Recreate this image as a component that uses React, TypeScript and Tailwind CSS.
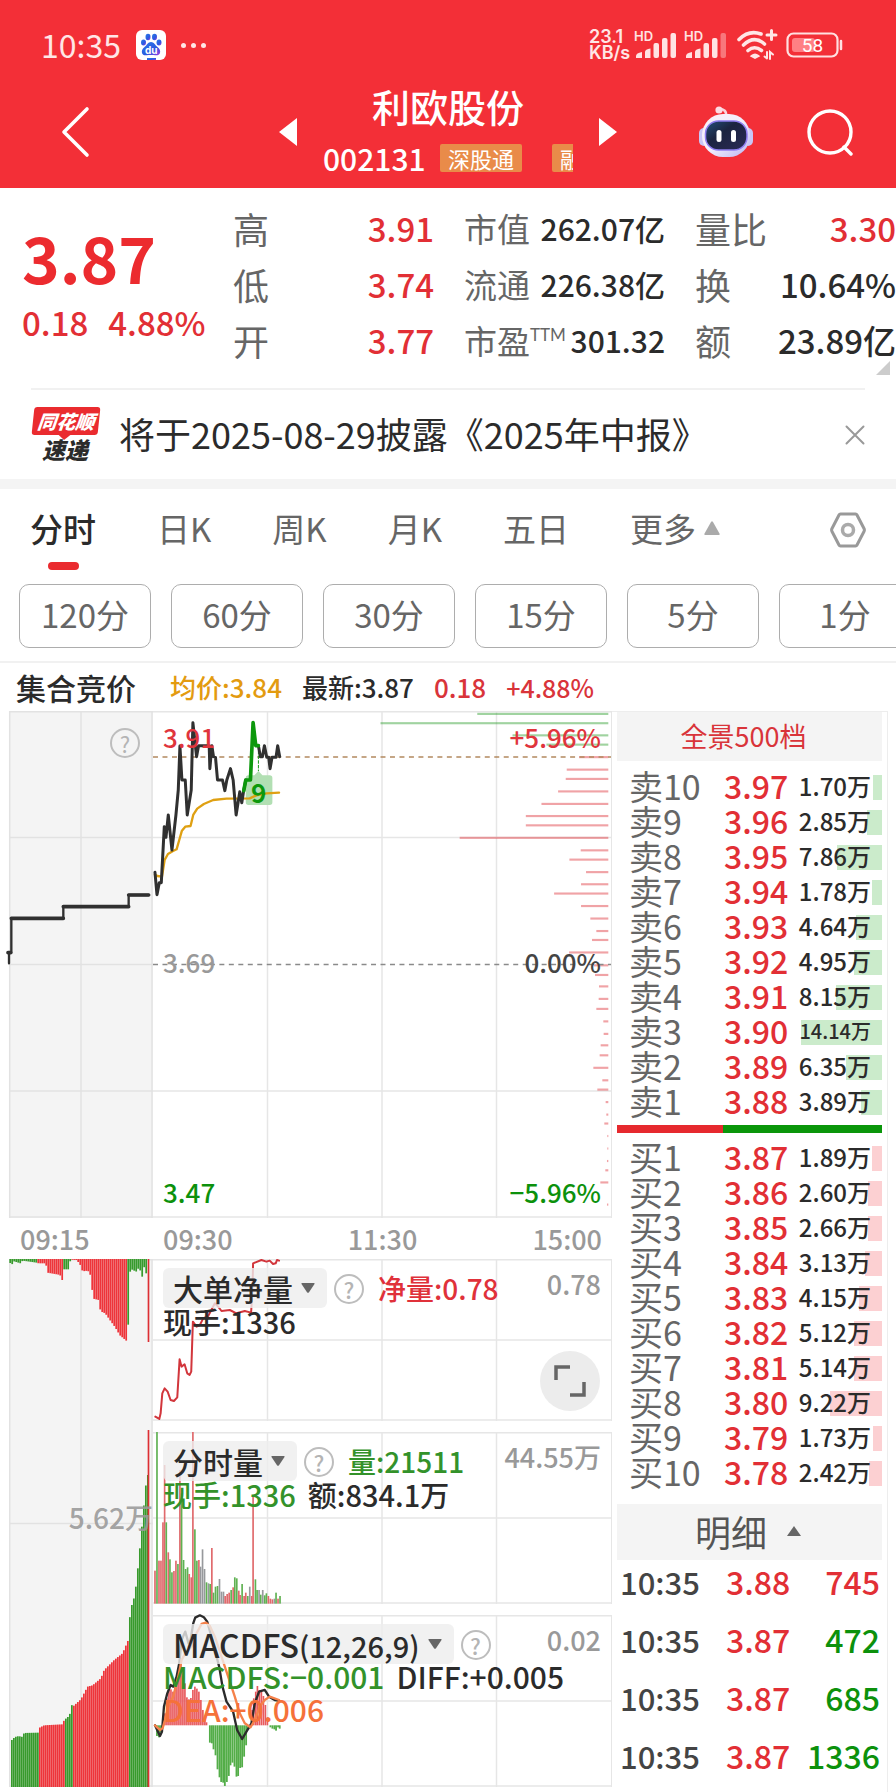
import React from "react";

type Tone = "r" | "g" | "n";

const quoteCols = [
  [
    { label: "高", value: "3.91", red: true },
    { label: "低", value: "3.74", red: true },
    { label: "开", value: "3.77", red: true },
  ],
  [
    { label: "市值", value: "262.07亿", red: false },
    { label: "流通", value: "226.38亿", red: false },
    { label: "市盈", sup: "TTM", value: "301.32", red: false },
  ],
  [
    { label: "量比", value: "3.30", red: true },
    { label: "换", value: "10.64%", red: false },
    { label: "额", value: "23.89亿", red: false },
  ],
];

const asks = [
  ["卖10", "3.97", "1.70万", 9],
  ["卖9", "3.96", "2.85万", 15],
  ["卖8", "3.95", "7.86万", 45],
  ["卖7", "3.94", "1.78万", 10],
  ["卖6", "3.93", "4.64万", 26],
  ["卖5", "3.92", "4.95万", 28],
  ["卖4", "3.91", "8.15万", 46],
  ["卖3", "3.90", "14.14万", 81],
  ["卖2", "3.89", "6.35万", 36],
  ["卖1", "3.88", "3.89万", 21],
] as const;

const bids = [
  ["买1", "3.87", "1.89万", 10],
  ["买2", "3.86", "2.60万", 14],
  ["买3", "3.85", "2.66万", 14],
  ["买4", "3.84", "3.13万", 17],
  ["买5", "3.83", "4.15万", 23],
  ["买6", "3.82", "5.12万", 28],
  ["买7", "3.81", "5.14万", 28],
  ["买8", "3.80", "9.22万", 52],
  ["买9", "3.79", "1.73万", 9],
  ["买10", "3.78", "2.42万", 13],
] as const;

const trades = [
  { time: "10:35", price: "3.88", volume: "745", up: true },
  { time: "10:35", price: "3.87", volume: "472", up: false },
  { time: "10:35", price: "3.87", volume: "685", up: false },
  { time: "10:35", price: "3.87", volume: "1336", up: false },
];

/* Volume by price: [y, left end]; the right end is shared. */
const profileUp = [
  [160, 840], [195, 803], [221, 800], [256, 777], [291, 727], [325, 680], [351, 680], [386, 481],
  [421, 845], [447, 811], [482, 861], [516, 846], [542, 765], [577, 846], [612, 874], [647, 892],
  [672, 879], [707, 810], [743, 885], [770, 888], [802, 900], [837, 899], [865, 892], [900, 913],
  [935, 914], [967, 905], [995, 902], [1030, 883], [1065, 910], [1091, 895], [1126, 920], [1161, 922],
  [1186, 916], [1221, 925], [1256, 925], [1291, 924], [1317, 919], [1351, 904], [1413, 924],
];
const profileDown = [[39, 534], [65, 243], [99, 640], [125, 742]];

const volumeBars: [number, number, Tone][] = [
  [465, 242, "r"], [471, -176, "g"], [477, 212, "r"], [483, 212, "r"], [489, 97, "r"], [494, -75, "r"],
  [499, 97, "g"], [505, 187, "r"], [510, 208, "g"], [516, 247, "g"], [522, 243, "r"], [528, 212, "r"],
  [534, 222, "g"], [540, -60, "r"], [545, 10, "g"], [551, 210, "g"], [557, 237, "g"], [563, 232, "g"],
  [568, 252, "r"], [574, 262, "r"], [579, -176, "r"], [585, 118, "g"], [591, 212, "g"], [597, 210, "r"],
  [602, 230, "n"], [608, 178, "n"], [614, 237, "n"], [620, 277, "g"], [626, 280, "n"], [631, 282, "g"],
  [636, 174, "r"], [641, 308, "g"], [647, 290, "g"], [653, 288, "g"], [659, 267, "n"], [665, 305, "n"],
  [671, 305, "n"], [676, 318, "r"], [682, 312, "r"], [688, 308, "r"], [694, 300, "g"], [700, 292, "r"],
  [705, 262, "g"], [711, 265, "g"], [717, 302, "r"], [721, 315, "r"], [727, 282, "g"], [733, 318, "r"],
  [738, 308, "r"], [744, 318, "g"], [750, 290, "n"], [756, 318, "r"], [760, 20, "r"], [767, 268, "g"],
  [772, 300, "g"], [778, 300, "n"], [783, 314, "g"], [789, 300, "n"], [795, 316, "g"], [800, 310, "g"],
  [806, 318, "r"], [812, 326, "r"], [818, 328, "r"], [824, 326, "n"], [829, 308, "g"], [835, 326, "r"],
  [841, 318, "g"],
];

const toneFill: Record<Tone, string> = { r: "#e0696c", g: "#5fb152", n: "#97999c" };

const auctionEdge: [number, number][] = [
  [33, 750], [42, 741], [55, 738], [62, 742], [70, 729], [112, 728], [116, 713], [130, 706], [185, 703],
  [190, 690], [206, 677], [212, 645], [218, 648], [240, 628], [260, 590], [275, 586], [300, 565],
  [310, 540], [340, 510], [365, 490], [384, 446], [388, 360], [396, 336], [402, 315], [408, 265],
  [414, 205], [420, 145], [426, 75], [432, 18], [438, -45],
];
const netEdge: [number, number][] = [
  [30, 12], [36, 18], [42, 8], [62, 14], [68, 6], [110, 12], [116, 14], [138, 14], [142, 42], [176, 48],
  [184, 52], [188, 68], [192, 32], [206, 32], [212, 3], [230, 4], [240, 16], [248, 38], [264, 36],
  [272, 50], [280, 120], [296, 124], [302, 158], [316, 164], [330, 184], [346, 206], [360, 230],
  [384, 250], [388, 42], [398, 32], [408, 40], [418, 26], [427, 54], [432, 22], [438, 44],
];

function valueAt(edge: [number, number][], x: number) {
  for (let i = 1; i < edge.length; i++) {
    if (x <= edge[i][0]) {
      const [x0, y0] = edge[i - 1];
      const [x1, y1] = edge[i];
      return x1 === x0 ? y1 : y0 + ((y1 - y0) * (x - x0)) / (x1 - x0);
    }
  }
  return edge[edge.length - 1][1];
}

const auctionXs = Array.from({ length: 69 }, (_, i) => 31 + i * 6);
const isAuctionGreen = (x: number) => x < 114 || (x > 187 && x < 213) || x > 384;

const macdUp: [number, number][] = [
  [495, 670], [501, 625], [507, 600], [513, 598], [519, 605], [525, 590], [531, 565], [537, 540],
  [543, 515], [549, 540], [555, 580], [561, 622], [567, 628], [573, 624], [579, 600], [585, 590],
  [591, 596], [597, 605], [603, 630], [609, 660], [615, 685], [620, 697], [757, 660], [762, 625],
  [768, 605], [773, 588], [779, 600], [785, 600], [791, 618], [797, 645], [803, 682],
];
const macdDown: [number, number][] = [
  [471, 738], [477, 742], [483, 728], [630, 758], [636, 760], [641, 778], [647, 796], [653, 838],
  [659, 862], [664, 876], [670, 878], [675, 888], [681, 876], [687, 858], [692, 826], [698, 818],
  [704, 830], [710, 860], [715, 858], [721, 834], [727, 832], [733, 800], [739, 766], [745, 718],
  [812, 712], [818, 716], [824, 718], [829, 722], [835, 712], [840, 716],
];

function Grid({ rows, height }: { rows: number[]; height: number }) {
  return (
    <g stroke="#e6e6e6" strokeWidth="1.5">
      {[114.75, 229.5, 344.25].map((x) => (
        <line key={x} x1={x} x2={x} y1="0" y2={height} />
      ))}
      {rows.map((y) => (
        <line key={y} x1="0" x2="459" y1={y} y2={y} />
      ))}
    </g>
  );
}

function Help() {
  return (
    <button
      type="button"
      aria-label="说明"
      className="flex size-[30px] shrink-0 items-center justify-center rounded-full border-2 border-[#bdbdbd] text-[22px] leading-none text-[#b4b4b4]"
    >
      ?
    </button>
  );
}

function IndicatorButton({ children }: { children: React.ReactNode }) {
  return (
    <button
      type="button"
      className="flex h-10 items-center gap-2 rounded-md bg-[#eeeeee]/80 pr-3 pl-[10px] text-[30px] leading-10 font-medium whitespace-nowrap text-[#2b2b2b]"
    >
      {children}
      <svg viewBox="0 0 14 10" className="h-2.5 w-3.5" fill="#666">
        <path d="M1 0h12q1 0 .5 1L8 9.300q-1 1-2 0L.5 1Q0 0 1 0z" />
      </svg>
    </button>
  );
}

function BookRow({ row, ask }: { row: readonly [string, string, string, number]; ask: boolean }) {
  const [label, price, volume, depth] = row;
  return (
    <tr className="h-[35px]">
      <th scope="row" className="w-[107px] p-0 pl-[12px] text-left text-[34px] leading-[35px] font-normal text-[#666]">
        {label}
      </th>
      <td className="p-0 text-[32px] leading-[35px] font-medium text-[#e22f35]">{price}</td>
      <td
        className={`relative w-[88px] p-0 pr-[11px] text-right leading-[35px] font-medium text-[#2b2b2b] ${
          volume.length > 5 ? "text-[20px]" : "text-[24px]"
        }`}
      >
        <span
          className={`absolute top-[7px] right-0 h-[25px] ${ask ? "bg-[#cbebcb]" : "bg-[#fcd0d2]"}`}
          style={{ width: depth }}
        />
        <span className="relative">{volume}</span>
      </td>
    </tr>
  );
}

function Signal({ weak }: { weak?: boolean }) {
  return (
    <svg viewBox="0 0 44 30" className="h-[30px] w-11" fill="#ffe3e3">
      <text x="0" y="11" fontSize="13" fontWeight="600" fontFamily="Inter, sans-serif">HD</text>
      <path d="M2 28v-2q0-3 6-4v6z" />
      <path d="M11 28v-6q0-3 5.500-3.500V28z" />
      <rect x="19.500" y="13" width="5.500" height="15" rx="2" />
      <rect x="28" y="8" width="5.500" height="20" rx="2" />
      <rect x="36.500" y="3" width="5.500" height="25" rx="2" opacity={weak ? 0.4 : 1} />
    </svg>
  );
}

function StatusBar() {
  return (
    <div className="flex h-[76px] items-center justify-between pt-[14px] pr-[52px] pl-[41px] text-[#ffe6e6]">
      <div className="flex items-center">
        <span className="pb-[3px] text-[32px] leading-none">10:35</span>
        <svg viewBox="0 0 30 30" className="ml-[15px] size-[30px]">
          <defs>
            <linearGradient id="paw" x1="0" y1="0" x2="1" y2="1">
              <stop offset="0" stopColor="#2a7be8" />
              <stop offset=".6" stopColor="#2b59e0" />
              <stop offset="1" stopColor="#a03be0" />
            </linearGradient>
          </defs>
          <rect width="30" height="30" rx="6" fill="#fff" />
          <g fill="url(#paw)">
            <ellipse cx="7.500" cy="12.500" rx="2.500" ry="3" />
            <ellipse cx="12" cy="7" rx="2.500" ry="3.200" />
            <ellipse cx="18.500" cy="7" rx="2.500" ry="3.200" />
            <ellipse cx="23" cy="12.500" rx="2.500" ry="3" />
            <path d="M15 12c3 0 4 3 6.500 5s3 4 2.500 6-2.500 2.500-4.500 2.300c-3-.4-6-.4-9 0C8 25.500 6.500 25 6 23s0-4 2.500-6S12 12 15 12z" />
            <rect x="11" y="28" width="9" height="2" />
          </g>
          <text x="15.200" y="23.500" textAnchor="middle" fontSize="10" fontWeight="700" fill="#fff" fontFamily="Inter, sans-serif">
            du
          </text>
        </svg>
        <span className="ml-[15px] flex gap-[5px]">
          <i className="size-[5px] rounded-full bg-current" />
          <i className="size-[5px] rounded-full bg-current" />
          <i className="size-[5px] rounded-full bg-current" />
        </span>
      </div>
      <div className="flex items-center">
        <span className="w-[45px] font-['Inter','Noto_Sans_CJK_SC',sans-serif] text-[18px] leading-4 font-semibold">
          23.1
          <br />
          KB/s
        </span>
        <Signal />
        <span className="w-[6px]" />
        <Signal weak />
        <svg viewBox="0 0 42 32" className="ml-2 h-8 w-[42px]" fill="none" stroke="#ffe6e6" strokeWidth="3.600" strokeLinecap="round">
          <path d="M3 10.500Q13 .5 25 5" />
          <path d="M7.500 16Q18 6 28.500 15" />
          <path d="M12 21.500q6.500-5.500 13.500 0" />
          <path d="M16 27q3-2.500 6 0l-3 1.500z" fill="#ffe6e6" strokeWidth="2.500" />
          <path d="M31 6h9M35.500 1.500v9" strokeWidth="3" />
          <path d="M31 29v-6M28.500 27.500l2.500 2M34 30v-7l3 2.500" strokeWidth="2" />
        </svg>
        <svg viewBox="0 0 58 26" className="ml-2 h-[26px] w-[58px]">
          <rect x="1.500" y="1.500" width="50" height="23" rx="6" fill="none" stroke="#ffe0e0" strokeWidth="2.200" />
          <rect x="6" y="6" width="23" height="14" rx="3" fill="#ff8084" />
          <path d="M55 9v8" stroke="#ffe0e0" strokeWidth="2.500" strokeLinecap="round" />
          <text x="26.500" y="20" textAnchor="middle" fontSize="19" fontWeight="400" fill="#fff" fontFamily="Roboto, sans-serif">
            58
          </text>
        </svg>
      </div>
    </div>
  );
}

function TitleBar() {
  return (
    <div className="grid h-[112px] grid-cols-[1fr_auto_1fr] items-center">
      <button type="button" aria-label="返回" className="ml-[60px] flex h-[82px] w-8 items-center">
        <svg viewBox="0 0 32 52" className="h-[52px] w-8" fill="none" stroke="#fff" strokeWidth="3.600" strokeLinecap="round" strokeLinejoin="round">
          <path d="M27 3L4 26l23 23" />
        </svg>
      </button>
      <div className="flex items-center gap-[26px]">
        <button type="button" aria-label="上一只">
          <svg viewBox="0 0 18 28" className="h-7 w-[18px]" fill="#fff">
            <path d="M18 0v28L0 14z" />
          </svg>
        </button>
        <div className="w-[250px] text-white">
          <h1 className="h-[52px] text-center text-[38px] leading-[38px] font-medium">利欧股份</h1>
          <div className="flex items-center overflow-hidden whitespace-nowrap">
            <span className="w-[117px] shrink-0 text-[30px] leading-[38px] font-medium">002131</span>
            <span className="shrink-0 rounded-xs bg-[#e98b49] px-[8px] text-[22px] leading-7">深股通</span>
            <span className="ml-[30px] shrink-0 rounded-xs bg-[#e98b49] pl-[8px] text-[22px] leading-7">融</span>
          </div>
        </div>
        <button type="button" aria-label="下一只">
          <svg viewBox="0 0 18 28" className="h-7 w-[18px]" fill="#fff">
            <path d="M0 0v28l18-14z" />
          </svg>
        </button>
      </div>
      <div className="flex items-center justify-end gap-[52px] pr-[42px]">
        <button type="button" aria-label="智能助手">
          <svg viewBox="0 0 56 52" className="h-[52px] w-14">
            <defs>
              <linearGradient id="shell" x1="0" y1="0" x2="1" y2="1">
                <stop offset="0" stopColor="#fdeff6" />
                <stop offset=".5" stopColor="#f1effd" />
                <stop offset="1" stopColor="#b9b3f0" />
              </linearGradient>
              <linearGradient id="visor" x1="0" y1="0" x2="1" y2="1">
                <stop offset="0" stopColor="#24507a" />
                <stop offset=".4" stopColor="#1c2440" />
                <stop offset="1" stopColor="#2a2a55" />
              </linearGradient>
            </defs>
            <path d="M21 3q8 0 7 7" fill="none" stroke="#fbd3dc" strokeWidth="2.500" />
            <circle cx="21" cy="4" r="3.600" fill="#fcdce4" />
            <rect x="1" y="22" width="10" height="18" rx="5" fill="#c9c6f6" />
            <rect x="45" y="22" width="10" height="18" rx="5" fill="#c9c6f6" />
            <rect x="4" y="8" width="48" height="43" rx="21" fill="url(#shell)" />
            <rect x="7.500" y="15" width="41.500" height="29" rx="13" fill="url(#visor)" stroke="#8f7df0" strokeWidth="1.500" />
            <rect x="18.500" y="24" width="5" height="12" rx="2.500" fill="#fff" />
            <rect x="33" y="24" width="5" height="12" rx="2.500" fill="#fff" />
          </svg>
        </button>
        <button type="button" aria-label="搜索">
          <svg viewBox="0 0 48 48" className="size-12" fill="none" stroke="#fff" strokeWidth="3.400" strokeLinecap="round">
            <circle cx="24" cy="24" r="21" />
            <path d="M38 39l7 7" />
          </svg>
        </button>
      </div>
    </div>
  );
}

function Quote() {
  return (
    <section className="relative flex h-[200px] pt-[12px]">
      <div className="w-[233px] shrink-0 pl-[22px] text-[#e22f35]">
        <p className="pt-[14px] text-[64px] leading-[84px] font-bold text-[#ec2b2f]">3.87</p>
        <p className="flex gap-5 text-[33px] leading-[48px] font-medium whitespace-nowrap">
          <span>0.18</span>
          <span>4.88%</span>
        </p>
      </div>
      <div className="grid flex-1 grid-cols-3 gap-x-[30px]">
        {quoteCols.map((col, i) => (
          <dl key={i}>
            {col.map((q) => (
              <div key={q.label} className="flex h-14 items-center justify-between whitespace-nowrap">
                <dt className={`flex items-center leading-none text-[#666] ${i === 1 ? "text-[33px]" : "text-[36px]"}`}>
                  {q.label}
                  {"sup" in q && <sup className="top-[-6px] font-['Lato',sans-serif] text-[17px] leading-none">{q.sup}</sup>}
                </dt>
                <dd
                  className={`leading-none font-medium ${q.red ? "text-[#e22f35]" : "text-[#2b2b2b]"} ${
                    i === 1 ? "text-[30px]" : "text-[33px]"
                  }`}
                >
                  {q.value}
                </dd>
              </div>
            ))}
          </dl>
        ))}
      </div>
      <svg viewBox="0 0 14 14" className="absolute right-[6px] bottom-[13px] size-[14px]" fill="#ccc">
        <path d="M14 0v14H0z" />
      </svg>
    </section>
  );
}

function News() {
  return (
    <section className="mx-[31px] flex h-[91px] items-center border-t-2 border-[#f1f1f1]">
      <div className="w-[68px] text-center italic">
        <p className="relative ml-[2px] -skew-x-6 rounded-[3px] bg-[#ea2b2f] text-[19px] leading-[28px] font-black text-white">
          同花顺
          <svg viewBox="0 0 14 6" className="absolute -bottom-[5px] left-[26px] h-1.5 w-3.5" fill="#ea2b2f">
            <path d="M0 0h14L7 6z" />
          </svg>
        </p>
        <p className="text-[23px] leading-[28px] font-black text-[#2b2b2b]">速递</p>
      </div>
      <a href="#report" className="ml-[20px] flex-1 pb-1 text-[36px] leading-none whitespace-nowrap text-[#2b2b2b]">
        将于2025-08-29披露《2025年中报》
      </a>
      <button type="button" aria-label="关闭">
        <svg viewBox="0 0 20 20" className="size-5" stroke="#999" strokeWidth="2" strokeLinecap="round">
          <path d="M1.500 1.500l17 17M18.500 1.500l-17 17" />
        </svg>
      </button>
    </section>
  );
}

function Tabs() {
  return (
    <nav className="flex h-[95px] items-start justify-between pt-[14px] pr-[30px] pl-[30px]">
      <div className="flex gap-[61px] text-[33px] leading-[50px] text-[#666]">
        <button type="button" className="flex flex-col items-center font-medium text-[#2b2b2b]">
          分时
          <i className="mt-[9px] h-2 w-[31px] rounded-full bg-[#ea2b2f]" />
        </button>
        <button type="button" className="self-start">日K</button>
        <button type="button" className="self-start">周K</button>
        <button type="button" className="self-start">月K</button>
        <button type="button" className="self-start">五日</button>
        <button type="button" className="flex items-center gap-2 self-start">
          更多
          <svg viewBox="0 0 16 14" className="h-3.5 w-4" fill="#aaa">
            <path d="M7 1q1-1.500 2 0l6.500 11.500q.5 1.500-1 1.500h-13Q0 14 .5 12.500z" />
          </svg>
        </button>
      </div>
      <button type="button" aria-label="设置" className="mt-[9px]">
        <svg viewBox="0 0 36 36" className="size-9" fill="none" stroke="#999" strokeWidth="3" strokeLinejoin="round">
          <path d="M10.500 2h15q1 0 1.500 1l7 13.500q.8 1.500 0 3L27 33q-.5 1-1.500 1h-15Q9.500 34 9 33L2 19.500q-.8-1.500 0-3L9 3q.5-1 1.500-1z" />
          <circle cx="18" cy="18" r="5.500" stroke="#aaa" strokeWidth="3.500" />
        </svg>
      </button>
    </nav>
  );
}

function Periods() {
  return (
    <div className="flex h-[79px] gap-5 overflow-hidden border-b-2 border-[#f1f1f1] pl-[19px]">
      {["120分", "60分", "30分", "15分", "5分", "1分"].map((p) => (
        <button
          key={p}
          type="button"
          className="h-16 w-[132px] shrink-0 rounded-[10px] border border-[#adadad] pb-[3px] text-[33px] leading-none text-[#666]"
        >
          {p}
        </button>
      ))}
    </div>
  );
}

function AuctionColumn() {
  return (
    <div className="flex flex-col">
      <div className="relative h-[507px] bg-[#f4f4f4]">
        <svg viewBox="0 0 144 507" preserveAspectRatio="none" className="absolute inset-0 size-full overflow-visible">
          <g stroke="#e2e2e2" strokeWidth="1.500" fill="none">
            <path d="M.7 0v507M72 0v507M143 0v507M0 .7h144M0 126.500h144M0 253.500h144M0 380h144M0 506h144" />
          </g>
          <g transform="translate(-9 -11) scale(.3333)" fill="none" stroke="#303030" strokeLinejoin="round" strokeLinecap="round">
            <path d="M27 790v-32h7V655h156v-35h196v-35h60" strokeWidth="7" />
            <path d="M34 655h156M190 620h196M386 585h60M24 758h8" strokeWidth="11" />
          </g>
        </svg>
        <span className="absolute top-[17px] right-[13px]">
          <Help />
        </span>
      </div>
      <div className="h-[41px] pl-[11px] text-[27px] leading-[42px] font-medium text-[#999]">09:15</div>
      <div className="relative h-[528px] bg-[#f4f4f4]">
        <svg viewBox="0 0 144 528" preserveAspectRatio="none" className="absolute inset-0 size-full">
          <path d="M.7 0v528M72 0v528M143 0v528M0 .7h144M0 264.500h144M0 527h144" stroke="#e2e2e2" strokeWidth="1.500" />
          <g transform="translate(-9 -49) scale(.3333)">
            {auctionXs.map((x) => (
              <rect
                key={x}
                x={x - 3}
                y="146"
                width="5.200"
                height={valueAt(netEdge, x)}
                fill={isAuctionGreen(x) ? "#379a2c" : "#ee343a"}
              />
            ))}
            <rect x="443" y="146" width="5" height="250" fill="#dd2e33" />
          </g>
          <g transform="translate(-9 231) scale(.3333)">
            {auctionXs.map((x) => (
              <rect
                key={x}
                x={x + 2}
                y={valueAt(auctionEdge, x + 2)}
                width="5.200"
                height={892 - valueAt(auctionEdge, x + 2)}
                fill={isAuctionGreen(x) ? "#379a2c" : "#ee343a"}
              />
            ))}
            <rect x="443" y="-180" width="5" height="1072" fill="#dd2e33" />
          </g>
        </svg>
        <span className="absolute top-[240px] right-0 text-[28px] leading-9 font-medium text-[#999]/90">5.62万</span>
      </div>
    </div>
  );
}

function PriceChart() {
  return (
    <div className="relative h-[507px] border-r border-[#e6e6e6]">
      <svg viewBox="0 0 459 507" preserveAspectRatio="none" className="absolute inset-0 size-full overflow-visible">
        <Grid rows={[0.7, 126.5, 380, 506]} height={507} />
        <g transform="translate(147 -11) scale(.3333 .3571)" opacity=".45">
          {profileUp.map(([y, x]) => (
            <rect key={y} x={x} y={y - 3} width={928 - x} height="6" fill="#e0353c" />
          ))}
          {profileDown.map(([y, x]) => (
            <rect key={y} x={x} y={y - 3} width={928 - x} height="6" fill="#2f9f2f" />
          ))}
        </g>
        <path d="M0 46h459" stroke="#b3895f" strokeWidth="1.500" strokeDasharray="5 4.500" />
        <path d="M0 253.500h459" stroke="#8a8a8a" strokeWidth="1.500" strokeDasharray="5 4.500" />
        <g transform="translate(-153 -11) scale(.3333)" fill="none" strokeLinejoin="round" strokeLinecap="round">
          <path d="M776 213l12 13h22q8 0 8 8v73q0 8-8 8h-64q-8 0-8-8v-73q0-8 8-8h18z" fill="#b2dfb3" />
          <path d="M776 140v72" stroke="#169a16" strokeWidth="3" strokeDasharray="8 6" />
          <path
            d="M465 524L472 528 486 530 494 480 504 462 518 454 530 448 538 420 546 392 556 380 572 378 580 345 592 326 612 312 640 300 680 296 750 295 770 286 800 280 838 278"
            stroke="#dfa012"
            strokeWidth="7"
          />
          <path
            d="M465 517L471 584 478 548 484 548 493 380 498 412 505 345 516 450 528 345 535 270 540 138 546 240 556 240 562 345 574 270 579 68 590 170 596 137 628 137 630 206 636 137 641 170 647 172 653 240 668 240 675 272 681 240 692 206 700 240 709 345 720 275 726 308 732 270 738 240"
            stroke="#303030"
            strokeWidth="9"
          />
          <path d="M776 137L782 170 788 170 794 137 801 172 807 172 811 206 817 172 829 172 834 137 840 170" stroke="#303030" strokeWidth="9" />
          <path d="M732 272L738 240 752 240 760 68 768 137 776 137" stroke="#0c980c" strokeWidth="11" />
        </g>
      </svg>
      <div className="absolute inset-0 flex flex-col justify-between py-[6px] pr-[10px] pl-[10px] text-[26px] leading-10 font-medium">
        <div className="flex justify-between text-[#e0353c]">
          <span>3.91</span>
          <span>+5.96%</span>
        </div>
        <div className="flex justify-between pb-[6px] text-[#999]">
          <span>3.69</span>
          <span className="text-[#444]">0.00%</span>
        </div>
        <div className="flex justify-between text-[#0c910c]">
          <span>3.47</span>
          <span>−5.96%</span>
        </div>
      </div>
      <span className="absolute top-[65px] left-[98px] text-[26px] leading-8 font-bold text-[#0c980c]">9</span>
    </div>
  );
}

function NetPanel() {
  return (
    <div className="relative h-[162px] border-r border-[#e6e6e6]">
      <svg viewBox="0 0 459 162" preserveAspectRatio="none" className="absolute inset-0 size-full overflow-visible">
        <Grid rows={[0.7, 81, 161]} height={162} />
        <path
          transform="translate(-153 -49) scale(.3333)"
          d="M466 620L478 627 482 610 487 550 494 535 503 545 512 570 522 573 532 562 539 448 545 470 554 463 562 490 569 495 574 485 579 335 590 350 600 345 610 325 625 318 645 280 655 290 665 303 690 300 710 310 735 303 754 308 758 240 760 160 785 150 800 155 810 152 820 162 828 160 832 150 838 152"
          fill="none"
          stroke="#d2363c"
          strokeWidth="6"
          strokeLinejoin="round"
          strokeLinecap="round"
        />
      </svg>
      <div className="relative flex items-start pt-[9px] pr-[10px] pl-[10px] text-[28px] font-medium">
        <IndicatorButton>大单净量</IndicatorButton>
        <span className="mt-[6px] ml-[7px]">
          <Help />
        </span>
        <span className="ml-[14px] leading-10 text-[#e0313a]">净量:0.78</span>
        <span className="ml-auto text-[27px] leading-8 text-[#999]">0.78</span>
      </div>
      <p className="relative pl-[10px] text-[29px] leading-[26px] font-medium text-[#2b2b2b]">现手:1336</p>
      <button type="button" aria-label="全屏" className="absolute right-[11px] bottom-[10px] flex size-[60px] items-center justify-center rounded-full bg-[#ececec]">
        <svg viewBox="0 0 32 32" className="size-8" fill="none" stroke="#666" strokeWidth="3.500">
          <path d="M2 15V2h14M30 17v13H16" />
        </svg>
      </button>
    </div>
  );
}

function VolumePanel() {
  return (
    <div className="relative mt-[11px] h-[172px] border-r border-[#e6e6e6]">
      <svg viewBox="0 0 459 172" preserveAspectRatio="none" className="absolute inset-0 size-full">
        <Grid rows={[0.7, 86, 171]} height={172} />
        <g transform="translate(-153 58) scale(.3333)">
          {volumeBars.map(([x, y, tone]) => (
            <rect key={x} x={x - 2.5} y={y} width="5" height={341 - y} fill={toneFill[tone]} />
          ))}
        </g>
      </svg>
      <div className="relative flex items-start pt-[9px] pr-[10px] pl-[10px] text-[28px] font-medium">
        <IndicatorButton>分时量</IndicatorButton>
        <span className="mt-[6px] ml-[7px]">
          <Help />
        </span>
        <span className="ml-[14px] leading-10 text-[#33922a]">量:21511</span>
        <span className="ml-auto text-[27px] leading-8 text-[#999]">44.55万</span>
      </div>
      <p className="relative flex gap-[12px] pl-[10px] text-[29px] leading-[26px] font-medium text-[#2b2b2b]">
        <span className="text-[#33922a]">现手:1336</span>
        <span>额:834.1万</span>
      </p>
    </div>
  );
}

function MacdPanel() {
  return (
    <div className="relative mt-[11px] h-[172px] border-r border-[#e6e6e6]">
      <svg viewBox="0 0 459 172" preserveAspectRatio="none" className="absolute inset-0 size-full overflow-visible">
        <Grid rows={[0.7, 86, 171]} height={172} />
        <g transform="translate(-153 -125) scale(.3333)">
          {macdUp.map(([x, y]) => (
            <rect key={x} x={x - 2.5} y={y} width="5" height={706 - y} fill="#e8595d" />
          ))}
          {macdDown.map(([x, y]) => (
            <rect key={x} x={x - 2.7} y="706" width="5.500" height={y - 706} fill="#53ad48" />
          ))}
          <g fill="none" strokeWidth="7" strokeLinejoin="round" strokeLinecap="round">
            <path
              d="M465 706L480 738 486 725 492 650 502 610 512 585 520 590 530 560 538 520 545 450 556 425 566 460 572 450 580 400 586 383 600 376 612 382 622 395 632 430 645 480 658 530 668 590 680 635 690 650 700 665 712 720 727 747 740 725 755 700 765 640 778 605 795 600 808 620 825 630 838 632"
              stroke="#2b2b2b"
            />
            <path
              d="M465 706L480 720 488 715 495 690 505 650 520 620 535 560 545 510 556 490 575 470 590 430 605 402 618 398 630 408 645 440 665 500 685 560 705 620 720 670 735 700 752 712 765 690 780 650 795 630 810 620 838 630"
              stroke="#f5814a"
            />
          </g>
        </g>
      </svg>
      <div className="relative flex items-start pt-[9px] pr-[10px] pl-[10px] text-[28px] font-medium">
        <IndicatorButton>
          <span className="text-[32px]">
            MACDFS<span className="text-[29px]">(12,26,9)</span>
          </span>
        </IndicatorButton>
        <span className="mt-[6px] ml-[7px]">
          <Help />
        </span>
        <span className="ml-auto text-[27px] leading-8 text-[#999]">0.02</span>
      </div>
      <p className="relative -mt-[4px] flex flex-wrap gap-x-3 pl-[10px] text-[30px] leading-[33px] font-medium whitespace-nowrap text-[#2b2b2b]">
        <span className="text-[#33922a]">MACDFS:−0.001</span>
        <span>DIFF:+0.005</span>
        <span className="text-[#f5713a]">DEA:+0.006</span>
      </p>
    </div>
  );
}

function OrderBook() {
  return (
    <aside className="border-t border-r border-[#ededed] pr-[5px] pl-[5px]">
      <button type="button" className="h-[49px] w-full bg-[#f4f4f4] pb-[3px] pr-[12px] text-[27px] leading-none text-[#d9343a]">
        全景500档
      </button>
      <table className="mt-[7px] w-full border-collapse">
        <tbody>
          {asks.map((r) => (
            <BookRow key={r[0]} row={r} ask />
          ))}
        </tbody>
      </table>
      <div className="mt-[7px] flex h-2">
        <i className="w-2/5 bg-[#e6292e]" />
        <i className="flex-1 bg-[#0a960a]" />
      </div>
      <table className="mt-[6px] w-full border-collapse">
        <tbody>
          {bids.map((r) => (
            <BookRow key={r[0]} row={r} ask={false} />
          ))}
        </tbody>
      </table>
      <button type="button" className="mt-[15px] flex h-14 w-full items-center justify-center gap-5 bg-[#f4f4f4] pb-[3px] pr-[3px] text-[36px] leading-none text-[#555]">
        明细
        <svg viewBox="0 0 14 10" className="h-2.5 w-3.5" fill="#666">
          <path d="M7 0l7 10H0z" />
        </svg>
      </button>
      <table className="w-full border-collapse text-[32px] leading-none font-medium">
        <tbody>
          {trades.map((t, i) => (
            <tr key={i} className="h-[58px]">
              <td className="w-[109px] p-0 pb-[16px] pl-[3px] text-[31px] text-[#444]">{t.time}</td>
              <td className="p-0 pb-[16px] text-[#e22f35]">{t.price}</td>
              <td className={`p-0 pr-[2px] pb-[16px] text-right ${t.up ? "text-[#e22f35]" : "text-[#0c910c]"}`}>{t.volume}</td>
            </tr>
          ))}
        </tbody>
      </table>
    </aside>
  );
}

export default function App() {
  return (
    <div className="min-h-screen overflow-x-hidden bg-white font-['Noto_Sans_CJK_SC',sans-serif]">
      <header className="bg-[#f32f37]">
        <StatusBar />
        <TitleBar />
      </header>
      <Quote />
      <News />
      <div className="h-[10px] bg-[#f4f4f4]" />
      <Tabs />
      <Periods />
      <div className="flex h-[48px] items-center gap-5 pl-4 text-[26px] leading-none font-medium whitespace-nowrap text-[#2b2b2b]">
        <span className="mr-[14px] text-[30px]">集合竞价</span>
        <span className="text-[#e39b10]">均价:3.84</span>
        <span>最新:3.87</span>
        <span className="text-[#d9343a]">0.18</span>
        <span className="text-[25px] text-[#d9343a]">+4.88%</span>
      </div>
      <main className="grid grid-cols-[144px_minmax(0,1fr)_276px] pr-2 pl-[9px]">
        <AuctionColumn />
        <div className="flex flex-col">
          <PriceChart />
          <div className="grid h-[41px] grid-cols-[1fr_1fr_1fr] pr-[10px] pl-[10px] text-[27px] leading-[42px] font-medium text-[#999]">
            <span>09:30</span>
            <span className="text-center">11:30</span>
            <span className="text-right">15:00</span>
          </div>
          <NetPanel />
          <VolumePanel />
          <MacdPanel />
        </div>
        <OrderBook />
      </main>
    </div>
  );
}
